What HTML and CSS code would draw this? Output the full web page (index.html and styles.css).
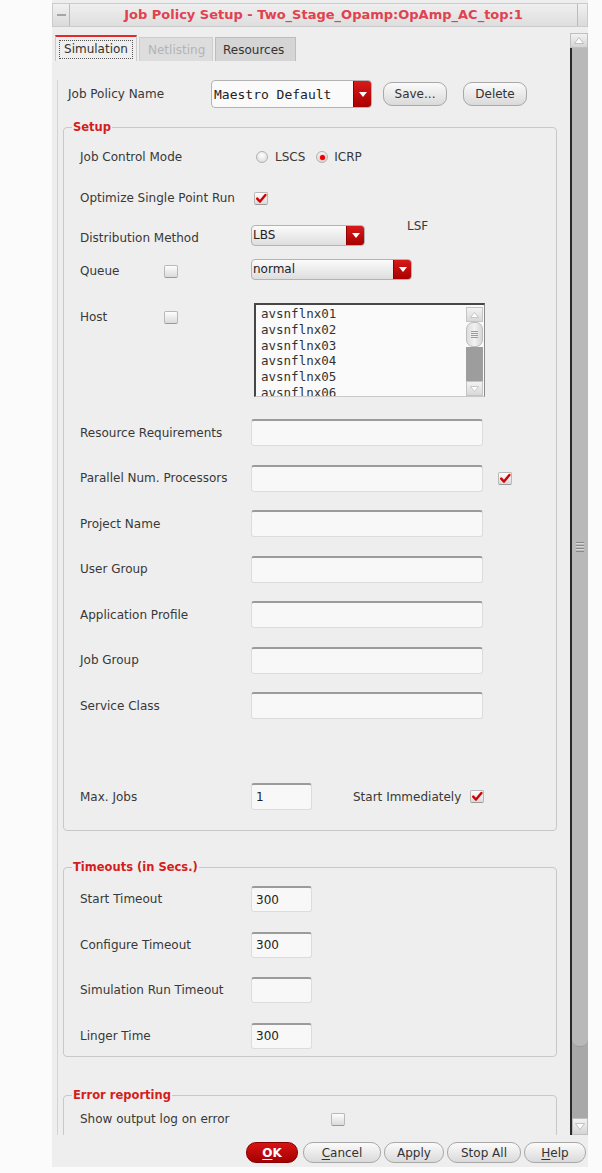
FILE: index.html
```html
<!DOCTYPE html>
<html>
<head>
<meta charset="utf-8">
<title>Job Policy Setup</title>
<link rel="stylesheet" href="styles.css">
</head>
<body>
<div class="window">
  <div class="titlebar">
    <div class="tb-btn tb-left"><span class="dash"></span></div>
    <div class="tb-title">Job Policy Setup - Two_Stage_Opamp:OpAmp_AC_top:1</div>
    <div class="tb-btn tb-right"></div>
  </div>

  <div class="main">
    <div class="scrollarea">
      <div class="tabs">
        <div class="tab active"><span class="focus">Simulation</span></div>
        <div class="tab disabled">Netlisting</div>
        <div class="tab other">Resources</div>
      </div>

      <div class="pane">
        <div class="policy-row">
          <span class="plabel">Job Policy Name</span>
          <div class="combo combo-name">
            <span class="combo-text mono">Maestro Default</span>
            <span class="combo-arrow"><svg width="8" height="5" viewBox="0 0 8 5"><polygon points="0,0 8,0 4,5" fill="#fff"/></svg></span>
          </div>
          <button class="btn btn-save">Save...</button>
          <button class="btn btn-delete">Delete</button>
        </div>

        <fieldset class="group group-setup">
          <legend>Setup</legend>
          <div class="gbody setup-body">
            <div class="row r-jcm">
              <span class="lbl">Job Control Mode</span>
              <span class="radio"></span><span class="rtext">LSCS</span>
              <span class="radio checked r2"></span><span class="rtext">ICRP</span>
            </div>

            <div class="row r-opt">
              <span class="lbl">Optimize Single Point Run</span>
              <span class="cb cb-opt"><svg width="12" height="11" viewBox="0 0 12 11"><path d="M2.2 5.6 L5 8.6 L10.4 2" fill="none" stroke="#d60000" stroke-width="2.4" stroke-linecap="round" stroke-linejoin="round"/></svg></span>
            </div>

            <div class="row r-dist">
              <span class="lbl lbl-low">Distribution Method</span>
              <div class="combo combo-lbs">
                <span class="combo-text">LBS</span>
                <span class="combo-arrow"><svg width="8" height="5" viewBox="0 0 8 5"><polygon points="0,0 8,0 4,5" fill="#fff"/></svg></span>
              </div>
              <span class="lsf">LSF</span>
            </div>

            <div class="row r-queue">
              <span class="lbl lbl-cell lbl-low2"><span class="lbl-short">Queue</span><span class="cb"></span></span>
              <div class="combo combo-queue">
                <span class="combo-text">normal</span>
                <span class="combo-arrow"><svg width="8" height="5" viewBox="0 0 8 5"><polygon points="0,0 8,0 4,5" fill="#fff"/></svg></span>
              </div>
            </div>

            <div class="row r-host">
              <span class="lbl lbl-cell lbl-top"><span class="lbl-short">Host</span><span class="cb"></span></span>
              <div class="listbox">
                <div class="list-items mono">
                  <div>avsnflnx01</div>
                  <div>avsnflnx02</div>
                  <div>avsnflnx03</div>
                  <div>avsnflnx04</div>
                  <div>avsnflnx05</div>
                  <div>avsnflnx06</div>
                </div>
                <div class="list-scroll">
                  <div class="ls-up"><svg width="9" height="6" viewBox="0 0 9 6"><polygon points="0.5,5.5 8.5,5.5 4.5,0.5" fill="#fdfdfd" stroke="#bdbdbd" stroke-width="0.8"/></svg></div>
                  <div class="ls-thumb"><span class="ls-grip"></span></div>
                  <div class="ls-track"></div>
                  <div class="ls-down"><svg width="9" height="6" viewBox="0 0 9 6"><polygon points="0.5,0.5 8.5,0.5 4.5,5.5" fill="#fdfdfd" stroke="#bdbdbd" stroke-width="0.8"/></svg></div>
                </div>
              </div>
            </div>

            <div class="row r-field r-first">
              <span class="lbl">Resource Requirements</span>
              <input class="field wide" type="text" value="">
            </div>
            <div class="row r-field">
              <span class="lbl">Parallel Num. Processors</span>
              <input class="field wide" type="text" value="">
              <span class="cb cb-par"><svg width="12" height="11" viewBox="0 0 12 11"><path d="M2.2 5.6 L5 8.6 L10.4 2" fill="none" stroke="#d60000" stroke-width="2.4" stroke-linecap="round" stroke-linejoin="round"/></svg></span>
            </div>
            <div class="row r-field">
              <span class="lbl">Project Name</span>
              <input class="field wide" type="text" value="">
            </div>
            <div class="row r-field">
              <span class="lbl">User Group</span>
              <input class="field wide" type="text" value="">
            </div>
            <div class="row r-field">
              <span class="lbl">Application Profile</span>
              <input class="field wide" type="text" value="">
            </div>
            <div class="row r-field">
              <span class="lbl">Job Group</span>
              <input class="field wide" type="text" value="">
            </div>
            <div class="row r-field">
              <span class="lbl">Service Class</span>
              <input class="field wide" type="text" value="">
            </div>

            <div class="row r-field r-max">
              <span class="lbl">Max. Jobs</span>
              <input class="field short" type="text" value="1">
              <span class="start-text">Start Immediately</span>
              <span class="cb cb-start"><svg width="12" height="11" viewBox="0 0 12 11"><path d="M2.2 5.6 L5 8.6 L10.4 2" fill="none" stroke="#d60000" stroke-width="2.4" stroke-linecap="round" stroke-linejoin="round"/></svg></span>
            </div>
          </div>
        </fieldset>

        <fieldset class="group group-timeouts">
          <legend>Timeouts (in Secs.)</legend>
          <div class="gbody timeouts-body">
            <div class="row r-to r-to-first">
              <span class="lbl">Start Timeout</span>
              <input class="field short" type="text" value="300">
            </div>
            <div class="row r-to">
              <span class="lbl">Configure Timeout</span>
              <input class="field short" type="text" value="300">
            </div>
            <div class="row r-to">
              <span class="lbl">Simulation Run Timeout</span>
              <input class="field short" type="text" value="">
            </div>
            <div class="row r-to">
              <span class="lbl">Linger Time</span>
              <input class="field short" type="text" value="300">
            </div>
          </div>
        </fieldset>

        <fieldset class="group group-error">
          <legend>Error reporting</legend>
          <div class="gbody error-body">
            <div class="row r-err">
              <span class="lbl lbl-err">Show output log on error</span>
              <span class="cb"></span>
            </div>
          </div>
        </fieldset>
      </div>
    </div>

    <div class="vscroll">
      <div class="vs-up"><svg width="10" height="7" viewBox="0 0 10 7"><polygon points="0.5,6.5 9.5,6.5 5,0.5" fill="#fbfbfb" stroke="#b5b5b5" stroke-width="0.8"/></svg></div>
      <div class="vs-body">
        <div class="vs-thumb"><span class="vs-grip"></span></div>
        <div class="vs-track"></div>
        <div class="vs-down"><svg width="10" height="7" viewBox="0 0 10 7"><polygon points="0.5,0.5 9.5,0.5 5,6.5" fill="#fbfbfb" stroke="#b5b5b5" stroke-width="0.8"/></svg></div>
      </div>
    </div>
  </div>

  <div class="buttonbar">
    <button class="btn bb bb-ok"><u>O</u>K</button>
    <button class="btn bb bb-cancel"><u>C</u>ancel</button>
    <button class="btn bb bb-apply">Apply</button>
    <button class="btn bb bb-stop">Stop All</button>
    <button class="btn bb bb-help"><u>H</u>elp</button>
  </div>
</div>
</body>
</html>
```

FILE: styles.css
```css
* { box-sizing: border-box; }

body {
  margin: 0;
  background: #fbfbfb;
  font-family: "DejaVu Sans", "Noto Sans", sans-serif;
  font-size: 12px;
  color: #383838;
}

.mono { font-family: "DejaVu Sans Mono", "Liberation Mono", monospace; }

.window {
  margin-left: 52px;
  width: 536px;
  height: 1167px;
  background: #eeeeee;
  display: flex;
  flex-direction: column;
}

/* ---------- title bar ---------- */
.titlebar {
  margin-top: 3px;
  height: 24px;
  display: flex;
  background: linear-gradient(#efefef, #dedede);
  border: 1px solid #cbcbcb;
}
.tb-btn {
  flex: none;
  display: flex;
  align-items: center;
  justify-content: center;
  background: linear-gradient(#f1f1f1, #dadada);
}
.tb-left { width: 17px; border-right: 1px solid #bcbcbc; }
.tb-right { width: 10px; border-left: 1px solid #bcbcbc; }
.dash { width: 9px; height: 2px; background: #a5a5a5; }
.tb-title {
  flex: 1;
  text-align: center;
  color: #e0424f;
  font-weight: bold;
  font-size: 13px;
  line-height: 22px;
}

/* ---------- main area ---------- */
.main {
  margin-top: 6px;
  height: 1102px;
  display: flex;
}
.scrollarea {
  width: 518px;
  flex: none;
  overflow: hidden;
}

.tabs {
  height: 28px;
  padding: 2px 0 0 3px;
  display: flex;
  align-items: flex-end;
}
.tab {
  display: flex;
  align-items: center;
  height: 24px;
  margin-left: 2px;
}
.tab.active {
  margin-left: 0;
  width: 82px;
  height: 26px;
  justify-content: center;
  border-top: 2px solid #e22a2a;
  border-left: 1px solid #cbcbcb;
  border-right: 1px solid #cbcbcb;
  background: #efefef;
  color: #333;
}
.focus {
  border: 1px dotted #555;
  padding: 0 4px;
  line-height: 17px;
}
.tab.disabled {
  width: 74px;
  padding-left: 8px;
  background: #dddddd;
  border: 1px solid #cdcdcd;
  border-bottom: 0;
  color: #b4b4b4;
}
.tab.other {
  width: 81px;
  padding-left: 7px;
  background: #d5d5d5;
  border: 1px solid #bdbdbd;
  border-bottom: 0;
  color: #333;
}

.pane {
  margin-left: 5px;
  border-left: 1px solid #d3d3d3;
  padding-left: 5px;
}

/* ---------- policy row ---------- */
.policy-row {
  margin-top: 19px;
  height: 28px;
  padding-left: 5px;
  display: flex;
  align-items: center;
}
.plabel { width: 143px; flex: none; }

.combo {
  display: flex;
  flex: none;
  border: 1px solid #b3b3b3;
  border-radius: 4px;
  overflow: hidden;
  background: linear-gradient(#fbfbfb, #dedede);
}
.combo-text {
  flex: 1;
  display: flex;
  align-items: center;
  padding-left: 1px;
  color: #222;
}
.combo-arrow {
  width: 18px;
  flex: none;
  display: flex;
  align-items: center;
  justify-content: center;
  background: linear-gradient(#d81a1a, #a80000);
  border-left: 1px solid #8c0000;
}
.combo-name {
  width: 161px;
  height: 28px;
  background: #fafafa;
}
.combo-name .combo-text { padding-left: 2px; font-size: 13px; }
.combo-lbs { width: 114px; height: 21px; }
.combo-queue { width: 161px; height: 21px; }

.btn {
  font-family: inherit;
  font-size: 12px;
  color: #333;
  padding: 0;
  border: 1px solid #a8a8a8;
  border-radius: 9px;
  background: linear-gradient(#fbfbfb, #dadada);
  display: flex;
  align-items: center;
  justify-content: center;
  flex: none;
}
.btn-save { margin-left: 11px; width: 64px; height: 24px; }
.btn-delete { margin-left: 16px; width: 64px; height: 24px; }

/* ---------- group boxes ---------- */
.group {
  width: 494px;
  margin: 0;
  padding: 0;
  border: 1px solid #c8c8c8;
  border-radius: 4px;
}
.group legend {
  margin-left: 8px;
  padding: 0 1px;
  font-size: 11.5px;
  font-weight: bold;
  line-height: 14px;
  color: #d41d1d;
}
.group-setup { margin-top: 12px; }
.group-timeouts { margin-top: 29px; }
.group-error { margin-top: 31px; }

.gbody { padding-left: 16px; }
.setup-body { padding-top: 11px; padding-bottom: 20px; }
.timeouts-body { padding-top: 12px; padding-bottom: 7.5px; }
.error-body { padding-top: 7px; padding-bottom: 40px; }

.row {
  display: flex;
  align-items: center;
}
.lbl {
  width: 171px;
  flex: none;
  line-height: 14px;
}
.lbl-cell { display: flex; align-items: center; }
.lbl-short { width: 84px; flex: none; }
.lbl-low { padding-top: 6px; }
.lbl-low2 { padding-top: 4px; }
.lbl-top { padding-top: 7px; align-self: flex-start; }

.r-jcm { height: 24px; }
.radio {
  width: 12px;
  height: 12px;
  flex: none;
  margin-left: 5px;
  border-radius: 50%;
  border: 1px solid #b2b2b2;
  background: radial-gradient(circle at 50% 35%, #ffffff, #d6d6d6);
  display: flex;
  align-items: center;
  justify-content: center;
}
.radio.r2 { margin-left: 11px; }
.radio.checked::after {
  content: "";
  width: 5px;
  height: 5px;
  border-radius: 50%;
  background: #e60000;
  box-shadow: 0 0 2px #ff4040;
}
.rtext { margin-left: 7px; }
.r2 + .rtext { margin-left: 6px; }

.cb {
  width: 14px;
  height: 13px;
  flex: none;
  border: 1px solid #b8b8b8;
  border-bottom-color: #999;
  border-radius: 2px;
  background: linear-gradient(#fdfdfd, #dadada);
  display: flex;
  align-items: center;
  justify-content: center;
}
.r-opt { margin-top: 17px; height: 24px; }
.cb-opt { margin-left: 3px; }

.r-dist { margin-top: 14px; height: 22px; }
.lsf {
  align-self: flex-start;
  margin-top: -5px;
  margin-left: 42px;
  line-height: 14px;
}
.r-queue { margin-top: 12px; height: 22px; }

.r-host { margin-top: 23px; height: 94px; align-items: flex-start; }
.listbox {
  margin-left: 3px;
  width: 231px;
  height: 94px;
  display: flex;
  background: #fafafa;
  border-top: 2px solid #474747;
  border-left: 2px solid #474747;
  border-right: 1px solid #8a8a8a;
  border-bottom: 1px solid #c8c8c8;
}
.list-items {
  flex: 1;
  padding: 1px 0 0 5px;
  font-size: 12.5px;
  line-height: 15.8px;
  color: #333;
  overflow: hidden;
}
.list-scroll {
  width: 17px;
  flex: none;
  margin: 2px 1px 0 0;
  display: flex;
  flex-direction: column;
}
.ls-up, .ls-down {
  height: 15px;
  flex: none;
  display: flex;
  align-items: center;
  justify-content: center;
  background: linear-gradient(#f3f3f3, #d8d8d8);
  border: 1px solid #c4c4c4;
}
.ls-thumb {
  height: 25px;
  flex: none;
  border-radius: 7px;
  border: 1px solid #bdbdbd;
  background: linear-gradient(90deg, #dcdcdc, #f2f2f2, #d6d6d6);
  display: flex;
  align-items: center;
  justify-content: center;
}
.ls-grip {
  width: 7px;
  height: 7px;
  background: repeating-linear-gradient(#9c9c9c 0 1px, transparent 1px 2px);
}
.ls-track { flex: 1; background: #9d9d9d; }

.field {
  height: 27px;
  flex: none;
  font-family: inherit;
  font-size: 12px;
  color: #222;
  padding: 0 0 0 4px;
  margin: 0;
  background: #f8f8f8;
  border: 1px solid #dcdcdc;
  border-top: 2px solid #9b9b9b;
  border-radius: 3px;
  outline: none;
}
.field.wide { width: 232px; }
.field.short { width: 61px; }

.r-field { height: 27px; margin-top: 18.5px; }
.r-first { margin-top: 22px; }
.cb-par { margin-left: 15px; }
.r-max { margin-top: 64px; }
.start-text { margin-left: 41px; }
.cb-start { margin-left: 9px; }

.r-to { height: 26px; margin-top: 19.5px; }
.r-to .field { height: 26px; }
.r-to-first { margin-top: 0; }

.r-err { height: 20px; }
.lbl-err { width: 251px; }

/* ---------- main vertical scrollbar ---------- */
.vscroll {
  width: 18px;
  flex: none;
  display: flex;
  flex-direction: column;
}
.vs-body {
  flex: 1;
  display: flex;
  flex-direction: column;
  border-left: 2px solid #2a2a2a;
  background: #aaaaaa;
}
.vs-up, .vs-down {
  flex: none;
  display: flex;
  align-items: center;
  justify-content: center;
  background: linear-gradient(#f2f2f2, #d5d5d5);
  border: 1px solid #bfbfbf;
}
.vs-up { height: 15px; }
.vs-down { height: 17px; }
.vs-thumb {
  height: 999px;
  flex: none;
  background: #b9b9b9;
  border-radius: 0 0 7px 7px;
  border-bottom: 1px solid #9a9a9a;
  display: flex;
  align-items: center;
  justify-content: center;
}
.vs-grip {
  width: 8px;
  height: 10px;
  background: repeating-linear-gradient(#8a8a8a 0 1px, #d6d6d6 1px 2px, transparent 2px 3px);
}
.vs-track { flex: 1; background: #a8a8a8; }

/* ---------- bottom button bar ---------- */
.buttonbar {
  height: 32px;
  padding: 7px 2px 0 0;
  display: flex;
  justify-content: flex-end;
  align-items: flex-start;
  gap: 4px;
}
.bb { height: 21px; border-radius: 10px; }
.bb-ok {
  width: 52px;
  margin-right: 1px;
  color: #fff;
  font-weight: bold;
  border-color: #8a0000;
  background: linear-gradient(#d81414, #a30000);
}
.bb-cancel { width: 78px; }
.bb-apply { width: 60px; margin-left: -1px; }
.bb-stop { width: 74px; margin-left: -1px; }
.bb-help { width: 62px; margin-left: -1px; }
.bb u { text-decoration-thickness: 1px; text-underline-offset: 2px; }
```
